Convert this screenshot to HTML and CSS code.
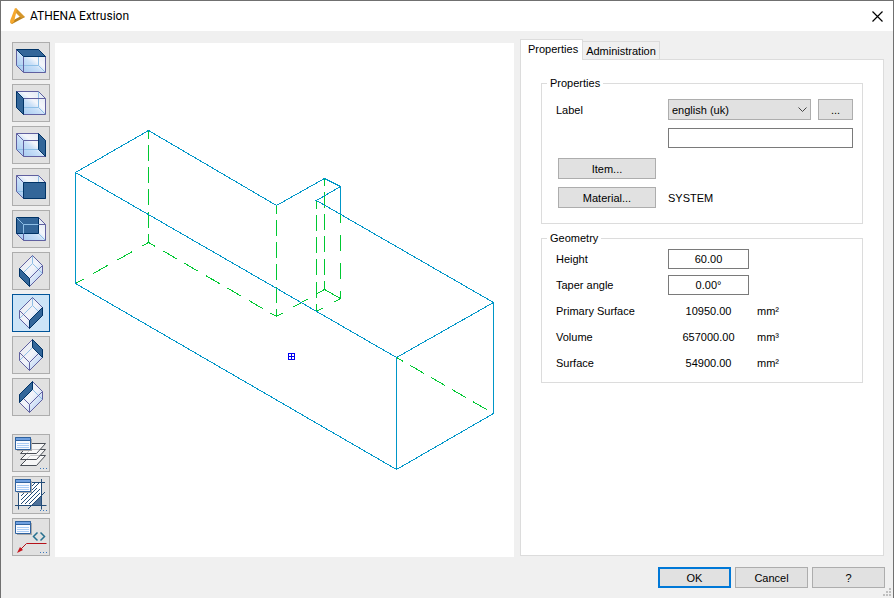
FILE: index.html
```html
<!DOCTYPE html>
<html lang="en">
<head>
    <meta charset="UTF-8">
    <meta name="viewport" content="width=device-width, initial-scale=1.0">
    <title>ATHENA Extrusion</title>
    <link rel="stylesheet" href="styles.css">
</head>
<body>
    <svg class="defs" width="0" height="0" aria-hidden="true">
        <defs>
            <linearGradient id="glass" x1="0" y1="1" x2="1" y2="0">
                <stop offset="0" stop-color="#9cc4ee"/>
                <stop offset="0.45" stop-color="#c9e0f8"/>
                <stop offset="0.6" stop-color="#f4f6fb"/>
                <stop offset="1" stop-color="#dce6f0"/>
            </linearGradient>
            <linearGradient id="glass-tilt" x1="0" y1="0" x2="1" y2="1">
                <stop offset="0" stop-color="#e4e8ee"/>
                <stop offset="0.5" stop-color="#f2f4fa"/>
                <stop offset="1" stop-color="#a4c8f2"/>
            </linearGradient>
        </defs>
        <symbol id="box" viewBox="0 0 36 36">
            <path fill="url(#glass)" d="M3.500 6.500H25.500L32.500 13.500V29.500H10.500L3.500 22.500Z"/>
            <path class="hidden-edge" d="M3.500 22.500H25.500V6.500M25.500 22.500L32.500 29.500"/>
            <path class="edge" d="M3.500 6.500H25.500L32.500 13.500V29.500H10.500L3.500 22.500ZM3.500 6.500L10.500 13.500H32.500M10.500 13.500V29.500"/>
        </symbol>
        <symbol id="tilted" viewBox="0 0 36 36">
            <path fill="url(#glass-tilt)" d="M19.500 2.500L29.500 12.500V20.500L16.500 33.500L6.500 23.500V15.500Z"/>
            <path class="hidden-edge" d="M19.500 2.500V10.500L29.500 20.500M19.500 10.500L6.500 23.500"/>
            <path class="edge" d="M19.500 2.500L29.500 12.500V20.500L16.500 33.500L6.500 23.500V15.500ZM6.500 15.500L16.500 25.500L29.500 12.500M16.500 25.500V33.500"/>
        </symbol>
        <symbol id="sheet" viewBox="0 0 36 36">
            <path fill="#a9a9a9" d="M4 4H19V16H4Z"/>
            <path fill="#f8faff" stroke="#2f629f" d="M2.500 2.500H17.500V14.500H2.500Z"/>
            <path fill="#6fa0e0" stroke="#2f629f" d="M2.500 2.500H17.500V5.500H2.500Z"/>
            <path stroke="#a9ccf5" d="M4 8.500H16M4 10.500H16M4 12.500H16"/>
        </symbol>
        <symbol id="dots" viewBox="0 0 36 36">
            <path fill="#3b78bd" d="M27 33h1v1h-1zM30 33h1v1h-1zM33 33h1v1h-1z"/>
        </symbol>
    </svg>

    <div class="window">
        <header class="titlebar">
            <svg class="logo" width="17" height="18" viewBox="0 0 17 18" aria-hidden="true">
                <path fill="#b9801d" d="M1 15L12 9L16 10L3 17Z"/>
                <path fill="#d5962a" d="M7 1L16 10L12 11L6 5Z"/>
                <path fill="#f6a82c" d="M6 1L8 2L5 15L2 17L1 14Z"/>
            </svg>
            <h1>ATHENA Extrusion</h1>
            <button class="close" aria-label="Close">
                <svg width="11" height="11" viewBox="0 0 11 11"><path stroke="#000" stroke-width="1.200" d="M0.500 0.500L10.500 10.500M10.500 0.500L0.500 10.500"/></svg>
            </button>
        </header>

        <main class="content">
            <div class="toolbar">
                <button class="tool" aria-label="Top face"><svg viewBox="0 0 36 36"><use href="#box"/><path class="face" d="M3.500 6.500H25.500L32.500 13.500H10.500Z"/></svg></button>
                <button class="tool" aria-label="Left face"><svg viewBox="0 0 36 36"><use href="#box"/><path class="face" d="M3.500 6.500L10.500 13.500V29.500L3.500 22.500Z"/></svg></button>
                <button class="tool" aria-label="Right face"><svg viewBox="0 0 36 36"><use href="#box"/><path class="face" d="M25.500 6.500L32.500 13.500V29.500L25.500 22.500Z"/></svg></button>
                <button class="tool" aria-label="Front face"><svg viewBox="0 0 36 36"><use href="#box"/><path class="face" d="M10.500 13.500H32.500V29.500H10.500Z"/></svg></button>
                <button class="tool" aria-label="Back face"><svg viewBox="0 0 36 36"><use href="#box"/><path class="face" d="M3.500 6.500H25.500V22.500H3.500Z"/><path class="hidden-edge" d="M3.500 6.500L10.500 13.500H25.500M10.500 13.500V22.500"/></svg></button>
                <button class="tool" aria-label="Isometric front left"><svg viewBox="0 0 36 36"><use href="#tilted"/><path class="face" d="M6.500 15.500L16.500 25.500V33.500L6.500 23.500Z"/></svg></button>
                <button class="tool selected" aria-label="Isometric front right" aria-pressed="true"><svg viewBox="0 0 36 36"><use href="#tilted"/><path class="face" d="M16.500 25.500L29.500 12.500V20.500L16.500 33.500Z"/></svg></button>
                <button class="tool" aria-label="Isometric back right"><svg viewBox="0 0 36 36"><use href="#tilted"/><path class="face" d="M19.500 2.500L29.500 12.500V20.500L19.500 10.500Z"/></svg></button>
                <button class="tool" aria-label="Isometric back left"><svg viewBox="0 0 36 36"><use href="#tilted"/><path class="face" d="M19.500 2.500L6.500 15.500V23.500L19.500 10.500Z"/></svg></button>

                <button class="tool options" aria-label="Layers">
                    <svg viewBox="0 0 36 36">
                        <path class="layer" d="M17.500 20.500H32.500L23.500 30.500H7.500Z"/>
                        <path class="layer" d="M17.500 14.500H32.500L23.500 24.500H7.500Z"/>
                        <path class="layer" d="M17.500 8.500H32.500L23.500 18.500H7.500Z"/>
                        <use href="#sheet"/><use href="#dots"/>
                    </svg>
                </button>
                <button class="tool" aria-label="Hatching">
                    <svg viewBox="0 0 36 36">
                        <path fill="#fff" d="M6 6H28V19L18 28H6Z"/>
                        <path fill="#4e7098" d="M28 19V28H19Z"/>
                        <path fill="none" stroke="#234c78" d="M5.500 5V32.500M28.500 2V32.500M2 5.500H32M2 28.500H33.500M15 32L32 15M8 19L12 15M8 23L16 15M8 27L24 11M12 27L27 12M16 27L27 16M19 9L22 6M19 13L26 6"/>
                        <use href="#sheet"/><use href="#dots"/>
                    </svg>
                </button>
                <button class="tool" aria-label="Leader">
                    <svg viewBox="0 0 36 36">
                        <path fill="none" stroke="#26708f" stroke-width="1.500" d="M24.500 13.500L20.500 17.500L24.500 21.500M27.500 13.500L31.500 17.500L27.500 21.500"/>
                        <path fill="none" stroke="#b5121b" d="M33.500 24.500H13.500L6 32"/>
                        <path fill="#c8141c" d="M4 34L7 28L10 31Z"/>
                        <use href="#sheet"/><use href="#dots"/>
                    </svg>
                </button>
            </div>

            <div class="preview">
                <svg viewBox="55 43 459 514" role="img" aria-label="Extrusion preview">
                    <!-- hidden edges -->
                    <g class="dashed">
                        <path d="M148.500 130.500V242.500M276.500 205.500V316.500M316.500 200.500V311.500" stroke-dasharray="16 6.300" stroke-dashoffset="8"/>
                        <path d="M324.500 178.500V289.500" stroke-dasharray="16 6.300" stroke-dashoffset="9"/>
                        <path d="M340.500 214.500V298.500" stroke-dasharray="16 12" stroke-dashoffset="8"/>
                        <path d="M75.500 283.500L148.500 242.500" stroke-dasharray="17 11" stroke-dashoffset="8"/>
                        <path d="M148.500 242.500L276.500 316.500" stroke-dasharray="16 8.800" stroke-dashoffset="8"/>
                        <path d="M276.500 316.500L324.500 289.500" stroke-dasharray="16 11.500" stroke-dashoffset="8"/>
                        <path d="M340.500 298.500L316.500 311.500" stroke-dasharray="8 12"/>
                        <path d="M396.500 357.500L493.500 413.500" stroke-dasharray="16 8" stroke-dashoffset="8"/>
                        <path d="M324.500 289.500L340.500 298.500"/>
                    </g>
                    <!-- visible edges -->
                    <g class="solid">
                        <path d="M75.500 172.500L148.500 130.500L276.500 205.500L324.500 178.500L340.500 186.500L316.500 200.500L493.500 302.500L396.500 357.500Z"/>
                        <path d="M75.500 172.500V283.500L396.500 469.500L493.500 413.500V302.500M396.500 357.500V469.500M340.500 186.500V214.500"/>
                    </g>
                    <path class="origin" d="M288.500 353.500H294.500V359.500H288.500ZM291.500 353.500V359.500M288.500 356.500H294.500"/>
                </svg>
            </div>

            <section class="side">
                <div class="tabs" role="tablist">
                    <button class="tab active" role="tab" aria-selected="true">Properties</button>
                    <button class="tab" role="tab" aria-selected="false">Administration</button>
                </div>
                <div class="panel" role="tabpanel">
                    <fieldset class="properties">
                        <legend>Properties</legend>
                        <label for="language">Label</label>
                        <div class="language">
                            <div class="select">
                                <select id="language">
                                    <option>english (uk)</option>
                                </select>
                                <svg width="9" height="6" viewBox="0 0 9 6" aria-hidden="true"><path fill="none" stroke="#444" d="M0.500 0.500L4.500 4.500L8.500 0.500"/></svg>
                            </div>
                            <button class="btn more">...</button>
                        </div>
                        <input class="label-text" type="text" aria-label="Label text">
                        <button class="btn item">Item...</button>
                        <button class="btn item">Material...</button>
                        <span>SYSTEM</span>
                    </fieldset>

                    <fieldset class="geometry">
                        <legend>Geometry</legend>
                        <label for="height">Height</label>
                        <input id="height" type="text" value="60.00">
                        <label for="taper">Taper angle</label>
                        <input id="taper" type="text" value="0.00°">
                        <label for="primary">Primary Surface</label>
                        <output id="primary">10950.00</output>
                        <span>mm²</span>
                        <label for="volume">Volume</label>
                        <output id="volume">657000.00</output>
                        <span>mm³</span>
                        <label for="surface">Surface</label>
                        <output id="surface">54900.00</output>
                        <span>mm²</span>
                    </fieldset>
                </div>
            </section>
        </main>

        <footer class="footer">
            <button class="btn default">OK</button>
            <button class="btn">Cancel</button>
            <button class="btn">?</button>
            <svg class="grip" width="9" height="9" viewBox="0 0 9 9" aria-hidden="true"><path fill="#bfbfbf" d="M6 0h2v2h-2zM3 3h2v2h-2zM6 3h2v2h-2zM0 6h2v2h-2zM3 6h2v2h-2zM6 6h2v2h-2z"/></svg>
        </footer>
    </div>
</body>
</html>
```
FILE: styles.css
```css
* {
    box-sizing: border-box;
}

body {
    margin: 0;
    font-family: "Liberation Sans", Arial, sans-serif;
    font-size: 11px;
    line-height: 16px;
    color: #000;
}

button,
input,
select {
    font: inherit;
    color: inherit;
    margin: 0;
    padding: 0;
    border-radius: 0;
}

.defs {
    position: absolute;
}

.window {
    display: flex;
    flex-direction: column;
    min-height: 100vh;
    background-color: #f0f0f0;
    border: 1px solid #707070;
}

/* Title bar */
.titlebar {
    display: flex;
    align-items: center;
    height: 30px;
    padding: 0 10px 0 8px;
    background-color: #fff;
}

.titlebar h1 {
    flex: 1;
    margin: 0 0 0 4px;
    font-family: Roboto, "Segoe UI", sans-serif;
    font-size: 12px;
    font-weight: normal;
}

.close {
    display: flex;
    border: none;
    background: none;
}

.content {
    flex: 1;
    display: flex;
    padding: 11px 9px 0 11px;
}

/* View and option buttons */
.toolbar {
    display: flex;
    flex-direction: column;
    gap: 4px;
    margin-right: 5px;
}

.tool {
    width: 38px;
    height: 38px;
    background-color: #e1e1e1;
    border: 1px solid #adadad;
}

.tool svg {
    display: block;
    width: 36px;
    height: 36px;
}

.tool.selected {
    background-color: #cce4f7;
    border-color: #005499;
}

.tool.options {
    margin-top: 14px;
}

.edge {
    fill: none;
    stroke: #6060a0;
}

.hidden-edge {
    fill: none;
    stroke: #8fbfe6;
}

.face {
    fill: #336699;
    stroke: #003366;
}

.layer {
    fill: #fff;
    fill-opacity: 0.7;
    stroke: #4a4f57;
}

/* Drawing */
.preview {
    flex: 1;
    min-width: 0;
    margin-top: 1px;
    background-color: #fff;
}

.preview svg {
    display: block;
    width: 100%;
    height: 100%;
    fill: none;
    shape-rendering: crispEdges;
}

.solid {
    stroke: #0096c8;
}

.dashed {
    stroke: #00c832;
}

.origin {
    stroke: #0000f0;
}

/* Tabs */
.side {
    display: flex;
    flex-direction: column;
    width: 364px;
    margin-left: 6px;
    padding-bottom: 1px;
}

.tabs {
    display: flex;
    align-items: flex-end;
    height: 20px;
    margin-top: -3px;
}

.tab {
    height: 18px;
    padding: 0 3px;
    background-color: #f0f0f0;
    border: 1px solid #dcdcdc;
    border-left: none;
    border-bottom: none;
}

.tab.active {
    position: relative;
    height: 21px;
    padding: 0 4px 2px 7px;
    margin-bottom: -1px;
    background-color: #fff;
    border-left: 1px solid #dcdcdc;
}

.panel {
    flex: 1;
    padding: 16px 20px;
    background-color: #fff;
    border: 1px solid #dcdcdc;
}

fieldset {
    min-width: 0;
    margin: 0;
    padding: 0 9px 0 14px;
    border: 1px solid #dcdcdc;
}

legend {
    margin-left: -9px;
    padding: 0 3px;
    line-height: 14px;
}

.properties {
    display: grid;
    grid-template-columns: 112px 1fr;
    row-gap: 8px;
    align-items: center;
    align-content: start;
    height: 148px;
    padding-top: 9px;
}

.language {
    display: flex;
    gap: 7px;
}

.select {
    position: relative;
    flex: 1;
    height: 21px;
}

.select select {
    width: 100%;
    height: 21px;
    padding: 0 3px;
    background-color: #e1e1e1;
    border: 1px solid #adadad;
    appearance: none;
}

.select svg {
    position: absolute;
    top: 8px;
    right: 4px;
    pointer-events: none;
}

.btn {
    height: 21px;
    background-color: #e1e1e1;
    border: 1px solid #adadad;
}

.more {
    width: 35px;
}

input {
    width: 100%;
    height: 20px;
    border: 1px solid #7a7a7a;
    background-color: #fff;
}

.label-text {
    grid-column: 2;
    margin-bottom: 2px;
}

.item {
    grid-column: 1;
    width: 98px;
    margin-left: 2px;
}

.geometry {
    display: grid;
    grid-template-columns: 112px 81px 1fr;
    grid-auto-rows: 20px;
    gap: 6px 0;
    align-items: center;
    height: 152px;
    margin-top: 7px;
    padding-top: 4px;
}

.geometry label {
    grid-column: 1;
}

.geometry input,
.geometry output {
    text-align: center;
}

.geometry span {
    padding-left: 8px;
}

/* Dialog buttons */
.footer {
    position: relative;
    display: flex;
    justify-content: flex-end;
    gap: 4px;
    padding: 10px 8px;
}

.footer .btn {
    width: 73px;
}

.footer .default {
    border: 2px solid #0078d7;
}

.grip {
    position: absolute;
    right: 1px;
    bottom: 1px;
}
```
